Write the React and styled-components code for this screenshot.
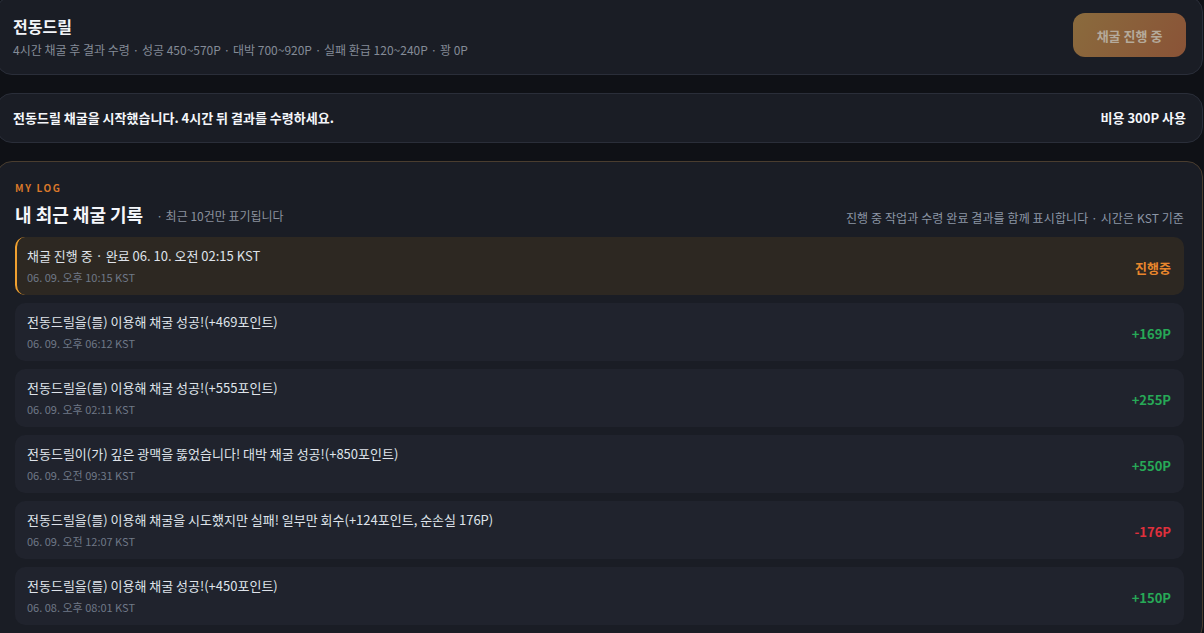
import styled, { createGlobalStyle } from 'styled-components'

const GlobalStyle = createGlobalStyle`
  html, body {
    margin: 0;
    padding: 0;
    background: #0f1116;
    overflow: hidden;
  }
  body {
    font-family: "Noto Sans CJK KR", "Noto Sans", sans-serif;
    color: #e6e9ef;
  }
`;

const logs = [
  { text: '채굴 진행 중 · 완료 06. 10. 오전 02:15 KST', time: '06. 09. 오후 10:15 KST', value: '진행중', kind: 'pending' },
  { text: '전동드릴을(를) 이용해 채굴 성공!(+469포인트)', time: '06. 09. 오후 06:12 KST', value: '+169P', kind: 'plus' },
  { text: '전동드릴을(를) 이용해 채굴 성공!(+555포인트)', time: '06. 09. 오후 02:11 KST', value: '+255P', kind: 'plus' },
  { text: '전동드릴이(가) 깊은 광맥을 뚫었습니다! 대박 채굴 성공!(+850포인트)', time: '06. 09. 오전 09:31 KST', value: '+550P', kind: 'plus' },
  { text: '전동드릴을(를) 이용해 채굴을 시도했지만 실패! 일부만 회수(+124포인트, 순손실 176P)', time: '06. 09. 오전 12:07 KST', value: '-176P', kind: 'minus' },
  { text: '전동드릴을(를) 이용해 채굴 성공!(+450포인트)', time: '06. 08. 오후 08:01 KST', value: '+150P', kind: 'plus' },
];

const valueColors = {
  pending: '#e8862c',
  plus: '#27a957',
  minus: '#e0303c',
};

const Page = styled.div`
  width: 1207px;
  margin: -4px 0 0 -4px;
  display: flex;
  flex-direction: column;
  gap: 18px;
`;

const Card = styled.section`
  background: #1a1d25;
  border: 1px solid ${p => p.$accent ? '#4a3d2f' : '#2a2e39'};
  border-radius: 16px;
`;

const ToolCard = styled(Card)`
  display: flex;
  align-items: flex-start;
  justify-content: space-between;
  padding: 16px;
`;

const ToolInfo = styled.div`
  display: flex;
  flex-direction: column;
  gap: 5px;
  padding-top: 2px;
`;

const ToolName = styled.h1`
  margin: 0;
  font-size: 16px;
  line-height: 22px;
  font-weight: 700;
  color: #f2f4f8;
`;

const ToolDesc = styled.p`
  margin: 0;
  font-size: 12px;
  line-height: 16px;
  color: #848b97;
`;

const MineButton = styled.button`
  width: 113px;
  height: 44px;
  border: none;
  border-radius: 12px;
  background: linear-gradient(120deg, #8a6b3d, #8a5337);
  color: #b5aa9b;
  font-family: inherit;
  font-size: 13px;
  font-weight: 700;
  cursor: not-allowed;
`;

const NoticeCard = styled(Card)`
  display: flex;
  align-items: center;
  justify-content: space-between;
  padding: 15px 16px;
  font-size: 13px;
  line-height: 18px;
  font-weight: 700;
  color: #f4f6fa;
`;

const LogCard = styled(Card)`
  padding: 19px 18px 16px 18px;
`;

const Eyebrow = styled.div`
  font-size: 10px;
  line-height: 14px;
  font-weight: 700;
  letter-spacing: 1.6px;
  color: #d9782a;
`;

const LogHeader = styled.div`
  display: flex;
  align-items: flex-end;
  justify-content: space-between;
  margin-top: 6px;
  margin-bottom: 10px;
`;

const TitleRow = styled.div`
  display: flex;
  align-items: center;
  gap: 13px;
`;

const LogTitle = styled.h2`
  margin: 0;
  font-size: 18px;
  line-height: 26px;
  font-weight: 700;
  color: #f4f6fa;
`;

const Hint = styled.span`
  font-size: 12px;
  line-height: 16px;
  color: ${p => p.$blue ? '#8c96a6' : '#8a919d'};
  padding-top: ${p => p.$blue ? '0' : '3px'};
  padding-bottom: ${p => p.$blue ? '1px' : '0'};
  letter-spacing: ${p => p.$blue ? '0.1px' : '0'};
`;

const LogList = styled.ul`
  list-style: none;
  margin: 0;
  padding: 0;
  display: flex;
  flex-direction: column;
  gap: 8px;
`;

const LogItem = styled.li`
  display: flex;
  align-items: center;
  justify-content: space-between;
  height: 58px;
  box-sizing: border-box;
  padding: 0 13px 0 12px;
  border-radius: 10px;
  background: ${p => p.$pending ? '#2d2822' : '#20232d'};
  border-left: ${p => p.$pending ? '2px solid #f0a030' : 'none'};
  padding-left: ${p => p.$pending ? '10px' : '12px'};
`;

const LogBody = styled.div`
  display: flex;
  flex-direction: column;
  gap: 5px;
`;

const LogText = styled.div`
  font-size: 13px;
  line-height: 18px;
  color: #dfe3ea;
`;

const LogTime = styled.div`
  font-size: 11px;
  line-height: 15px;
  color: #6f7887;
`;

const LogValue = styled.div`
  font-size: 13px;
  font-weight: 700;
  color: ${p => valueColors[p.$kind]};
  padding-top: 3px;
`;

export default function App() {
  return (
    <>
      <GlobalStyle />
      <Page>
        <ToolCard>
          <ToolInfo>
            <ToolName>전동드릴</ToolName>
            <ToolDesc>4시간 채굴 후 결과 수령 · 성공 450~570P · 대박 700~920P · 실패 환급 120~240P · 꽝 0P</ToolDesc>
          </ToolInfo>
          <MineButton disabled>채굴 진행 중</MineButton>
        </ToolCard>

        <NoticeCard>
          <span>전동드릴 채굴을 시작했습니다. 4시간 뒤 결과를 수령하세요.</span>
          <span>비용 300P 사용</span>
        </NoticeCard>

        <LogCard $accent>
          <Eyebrow>MY LOG</Eyebrow>
          <LogHeader>
            <TitleRow>
              <LogTitle>내 최근 채굴 기록</LogTitle>
              <Hint>· 최근 10건만 표기됩니다</Hint>
            </TitleRow>
            <Hint $blue>진행 중 작업과 수령 완료 결과를 함께 표시합니다 · 시간은 KST 기준</Hint>
          </LogHeader>
          <LogList>
            {logs.map((log, i) => (
              <LogItem key={i} $pending={log.kind === 'pending'}>
                <LogBody>
                  <LogText>{log.text}</LogText>
                  <LogTime>{log.time}</LogTime>
                </LogBody>
                <LogValue $kind={log.kind}>{log.value}</LogValue>
              </LogItem>
            ))}
          </LogList>
        </LogCard>
      </Page>
    </>
  )
}
